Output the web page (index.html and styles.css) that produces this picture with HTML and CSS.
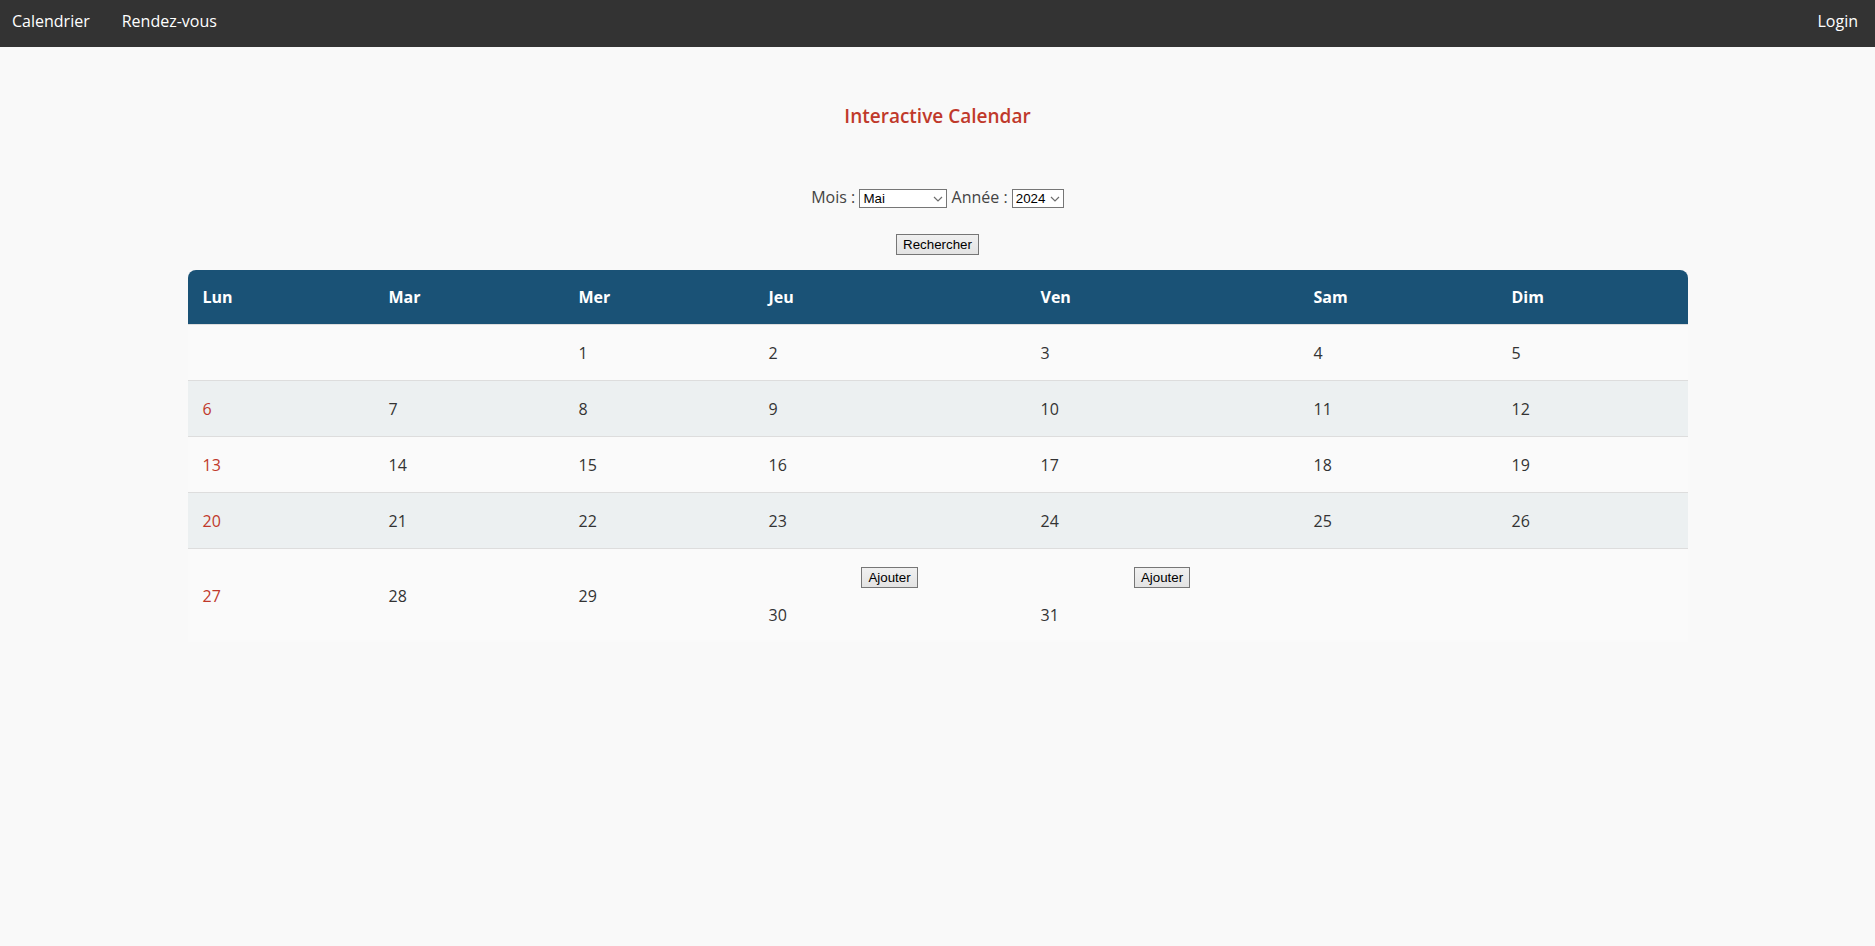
FILE: index.html
```html
<!DOCTYPE html>
<html lang="fr">
<head>
<meta charset="utf-8">
<title>Interactive Calendar</title>
<link rel="stylesheet" href="styles.css">
</head>
<body>
<nav class="topnav">
  <div class="nav-left">
    <a class="nav-link" href="#">Calendrier</a>
    <a class="nav-link" href="#">Rendez-vous</a>
  </div>
  <a class="nav-link" href="#">Login</a>
</nav>

<main class="page">
  <h1 class="title">Interactive Calendar</h1>

  <form class="search">
    <div class="fields">
      <label for="mois">Mois :</label>
      <span class="sel-wrap">
        <select id="mois" class="sel sel-month">
          <option>Janvier</option><option>Février</option><option>Mars</option><option>Avril</option>
          <option selected>Mai</option><option>Juin</option><option>Juillet</option><option>Août</option>
          <option>Septembre</option><option>Octobre</option><option>Novembre</option><option>Décembre</option>
        </select>
        <svg class="chev" width="10" height="6" viewBox="0 0 10 6"><path d="M1 1 L5 5 L9 1" fill="none" stroke="#6d6d6d" stroke-width="1.2"/></svg>
      </span>
      <label for="annee">Année :</label>
      <span class="sel-wrap">
        <select id="annee" class="sel sel-year">
          <option>2023</option><option selected>2024</option><option>2025</option>
        </select>
        <svg class="chev" width="10" height="6" viewBox="0 0 10 6"><path d="M1 1 L5 5 L9 1" fill="none" stroke="#6d6d6d" stroke-width="1.2"/></svg>
      </span>
    </div>
    <div class="submit-row">
      <button type="button" class="btn">Rechercher</button>
    </div>
  </form>

  <table class="calendar">
    <thead>
      <tr>
        <th class="c1">Lun</th><th class="c2">Mar</th><th class="c3">Mer</th><th class="c4">Jeu</th><th class="c5">Ven</th><th class="c6">Sam</th><th class="c7">Dim</th>
      </tr>
    </thead>
    <tbody>
      <tr>
        <td class="mon"></td><td></td><td>1</td><td>2</td><td>3</td><td>4</td><td>5</td>
      </tr>
      <tr>
        <td class="mon">6</td><td>7</td><td>8</td><td>9</td><td>10</td><td>11</td><td>12</td>
      </tr>
      <tr>
        <td class="mon">13</td><td>14</td><td>15</td><td>16</td><td>17</td><td>18</td><td>19</td>
      </tr>
      <tr>
        <td class="mon">20</td><td>21</td><td>22</td><td>23</td><td>24</td><td>25</td><td>26</td>
      </tr>
      <tr class="last">
        <td class="mon">27</td><td>28</td><td>29</td>
        <td><div class="add"><button type="button" class="btn">Ajouter</button></div>30</td>
        <td><div class="add"><button type="button" class="btn">Ajouter</button></div>31</td>
        <td></td><td></td>
      </tr>
    </tbody>
  </table>
</main>
</body>
</html>
```

FILE: styles.css
```css
html, body {
  margin: 0;
  padding: 0;
}

body {
  background: #f9f9f9;
  font-family: "Open Sans", "Liberation Sans", sans-serif;
  color: #333;
}

.topnav {
  height: 47px;
  box-sizing: border-box;
  background: #333;
  display: flex;
  justify-content: space-between;
  align-items: flex-start;
  padding: 10px 17px 0 12px;
}

.nav-left {
  display: flex;
  gap: 32px;
}

.nav-link {
  color: #fff;
  text-decoration: none;
  font-size: 16px;
  line-height: 22px;
}

.title {
  margin: 56px 0 0;
  text-align: center;
  font-size: 19px;
  line-height: 27px;
  font-weight: 600;
  color: #c0392b;
}

.search {
  margin: 56px 0 0;
  text-align: center;
}

.fields {
  font-size: 16px;
  line-height: 22px;
  color: #444;
}

.sel-wrap {
  position: relative;
  display: inline-block;
  vertical-align: middle;
  line-height: 0;
}

.sel {
  -webkit-appearance: none;
  appearance: none;
  font-family: "Liberation Sans", Arial, sans-serif;
  font-size: 13.33px;
  height: 19px;
  box-sizing: border-box;
  background: #fff;
  color: #000;
  border: 1px solid #767676;
  border-radius: 0;
  padding: 0 16px 0 3px;
  margin: 0;
}

.chev {
  position: absolute;
  right: 4px;
  top: 7px;
  pointer-events: none;
}

.sel-month {
  width: 88px;
}

.sel-year {
  width: 52px;
}

.submit-row {
  margin-top: 24px;
  line-height: 22px;
}

.btn {
  font-family: "Liberation Sans", Arial, sans-serif;
  font-size: 13.33px;
  color: #000;
  background: linear-gradient(#f0f0f0, #e3e3e3);
  border: 1px solid #767676;
  border-radius: 0;
  padding: 1px 6px;
  height: 21px;
  box-sizing: border-box;
  vertical-align: middle;
}

.calendar {
  width: 1500px;
  margin: 15px auto 0;
  border-collapse: separate;
  border-spacing: 0;
  table-layout: fixed;
  font-size: 16px;
}

.calendar th {
  background: #1a5276;
  color: #fff;
  text-align: left;
  font-weight: 700;
  padding: 15px;
  line-height: 24px;
  border-bottom: 1px solid #ddd;
}

.calendar th:first-child {
  border-top-left-radius: 8px;
}

.calendar th:last-child {
  border-top-right-radius: 8px;
}

.c1 { width: 156px; }
.c2 { width: 160px; }
.c3 { width: 160px; }
.c4 { width: 242px; }
.c5 { width: 243px; }
.c6 { width: 168px; }
.c7 { width: 161px; }

.calendar td {
  padding: 16px 15px 15px;
  line-height: 24px;
  border-bottom: 1px solid #ddd;
  background: #fafafa;
  color: #333;
  vertical-align: middle;
}

.calendar tbody tr:nth-child(even) td {
  background: #ecf0f1;
}

.calendar tr.last td {
  border-bottom: none;
  padding: 15px;
}

.calendar td.mon {
  color: #c0392b;
}

.add {
  text-align: center;
  line-height: 24px;
  margin-bottom: 15px;
}

.add .btn {
  vertical-align: baseline;
}
```
